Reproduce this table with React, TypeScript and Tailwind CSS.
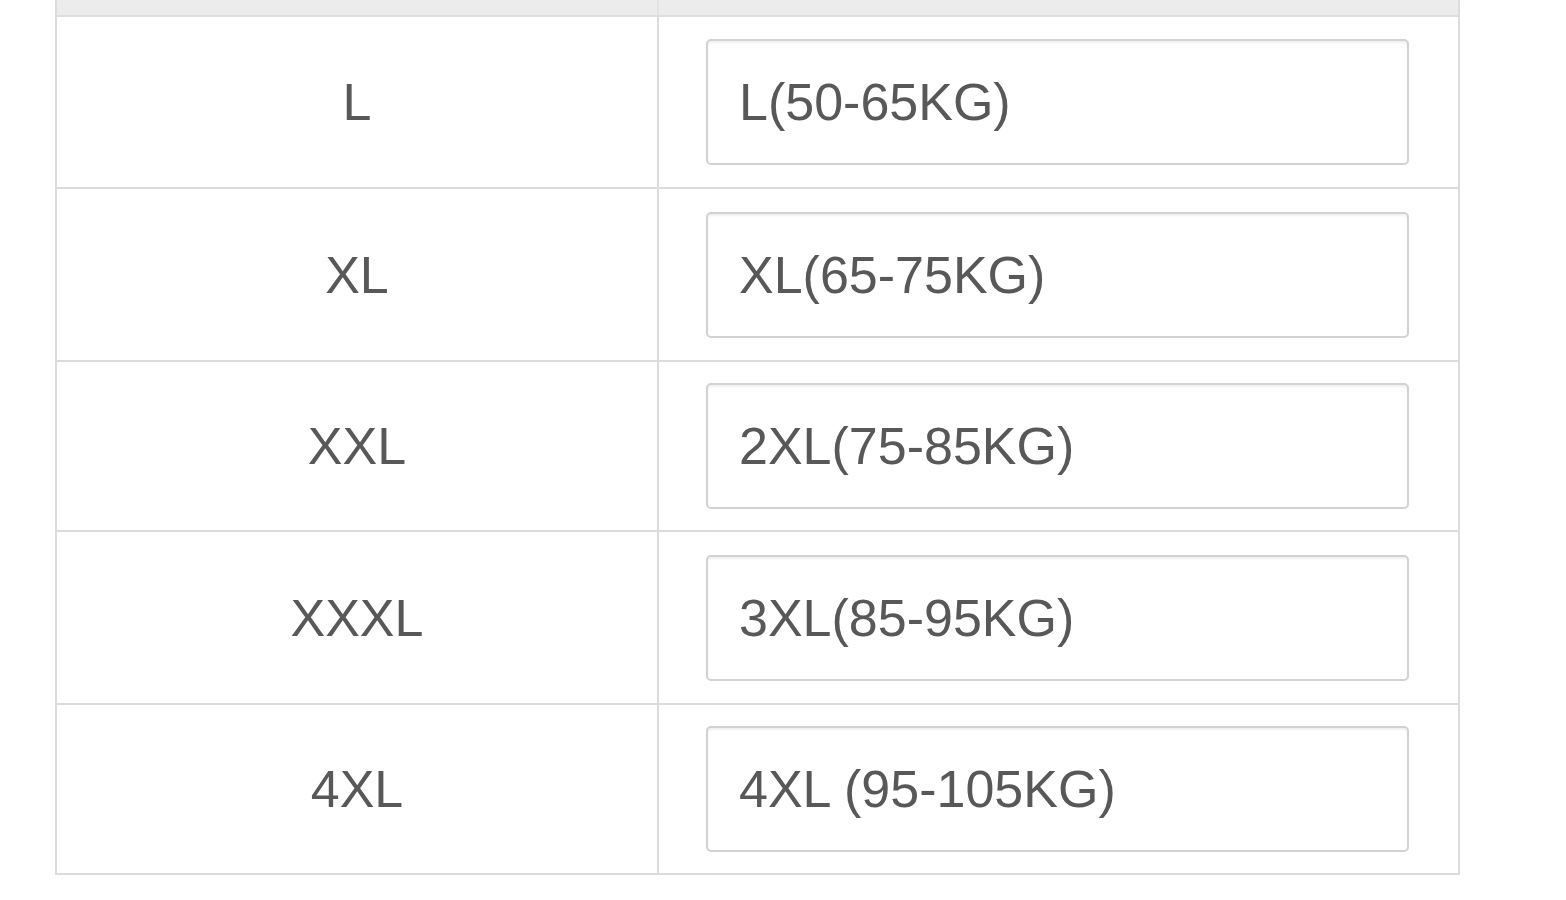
import React from 'react';

const rows = [
    { size: 'L', value: 'L(50-65KG)', h: 'h-[170px]' },
    { size: 'XL', value: 'XL(65-75KG)', h: 'h-[173px]' },
    { size: 'XXL', value: '2XL(75-85KG)', h: 'h-[170px]' },
    { size: 'XXXL', value: '3XL(85-95KG)', h: 'h-[173px]' },
    { size: '4XL', value: '4XL (95-105KG)', h: 'h-[170px]' },
];

const App = () => {
    return (
        <div className="w-[1566px] h-[900px] bg-white" style={{ fontFamily: '"Liberation Sans", Arial, sans-serif' }}>
            <div className="ml-[55px] w-[1405px] border-l-2 border-r-2 border-b-2 border-[#dcdcdc]">
                {/* header (cut off at top) */}
                <div className="flex h-[17px] bg-[#ececec] border-b-2 border-[#dedede]">
                    <div className="w-[602px] border-r-2 border-[#e2e2e2]"></div>
                    <div className="flex-1"></div>
                </div>
                {rows.map((row, index) => (
                    <div key={index} className={`flex ${row.h} ${index > 0 ? 'border-t-2 border-[#dcdcdc]' : ''}`}>
                        <div className="w-[602px] border-r-2 border-[#dcdcdc] flex items-center justify-center text-[52px] text-[#585858] leading-none">
                            {row.size}
                        </div>
                        <div className="flex-1 flex items-center pl-[47px]">
                            <div className="w-[703px] h-[126px] border-2 border-[#d2d2d2] rounded-[5px] bg-white shadow-[inset_0_2px_2px_rgba(0,0,0,0.06)] flex items-center pl-[31px] text-[52px] text-[#585858] leading-none">
                                {row.value}
                            </div>
                        </div>
                    </div>
                ))}
            </div>
        </div>
    );
};

export default App;
